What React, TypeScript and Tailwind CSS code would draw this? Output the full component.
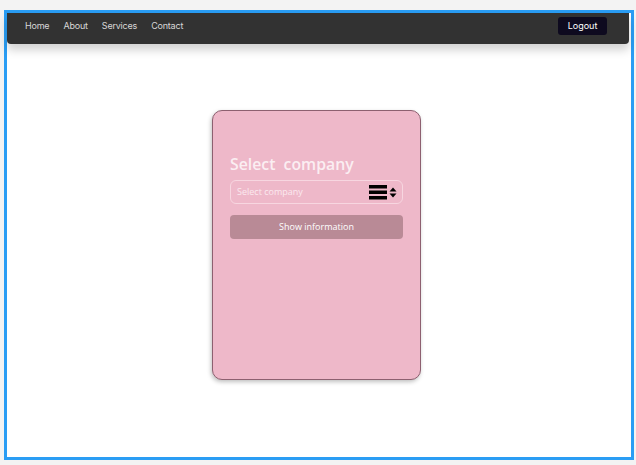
import React from "react";

export default function App() {
  return (
    <div className="w-[636px] h-[465px] bg-[#f3f3f3] pl-[4px] pt-[10px] overflow-hidden">
      <div className="w-[630px] h-[450px] border-[3px] border-[#2a9df4] bg-white flex flex-col">
        <nav className="h-[31px] w-[622px] bg-[#323232] rounded-b-[4px] shadow-[0_6px_10px_rgba(0,0,0,0.18)] flex items-start justify-between pl-[18px] pr-[22px] font-['Inter',sans-serif]">
          <div className="flex items-center gap-[14px] text-[9px] tracking-[-0.2px] text-[#d8d8d8] pt-[7px] leading-[12px]">
            <span>Home</span>
            <span>About</span>
            <span>Services</span>
            <span>Contact</span>
          </div>
          <button className="mt-[4px] h-[18px] w-[49px] bg-[#0e0a1f] rounded-[3px] text-[9px] text-white flex items-center justify-center">
            Logout
          </button>
        </nav>
        <div className="flex justify-center pt-[66px] pr-[5px]">
          <div className="w-[209px] h-[270px] bg-[#eeb8c9] border border-[#8d6070] rounded-[10px] shadow-[-1px_2px_4px_rgba(0,0,0,0.25)] px-[17px] pt-[42px] font-['Open_Sans',sans-serif]">
            <h2 className="text-[15.8px] font-semibold text-[#fbeef2] whitespace-pre leading-[22px]">Select  company</h2>
            <div className="mt-[5px] h-[24px] border border-[#f7d6e0] rounded-[6px] flex items-center justify-between pl-[6px] pr-[5px]">
              <span className="text-[9px] text-[#fbe9ef]">Select company</span>
              <div className="flex items-center gap-[2px]">
                <svg width="18" height="15" viewBox="0 0 18 15">
                  <rect x="0" y="0" width="18" height="3.5" fill="#000" />
                  <rect x="0" y="5.5" width="18" height="3.5" fill="#000" />
                  <rect x="0" y="11" width="18" height="3.5" fill="#000" />
                </svg>
                <svg width="8" height="11" viewBox="0 0 8 11">
                  <path d="M4 0.5 L7.5 4.5 L0.5 4.5 Z" fill="#000" />
                  <path d="M4 10.5 L7.5 6.5 L0.5 6.5 Z" fill="#000" />
                </svg>
              </div>
            </div>
            <button className="mt-[11px] w-full h-[24px] bg-[#b98a96] rounded-[4px] text-[9px] text-white flex items-center justify-center">
              Show information
            </button>
          </div>
        </div>
      </div>
    </div>
  );
}
